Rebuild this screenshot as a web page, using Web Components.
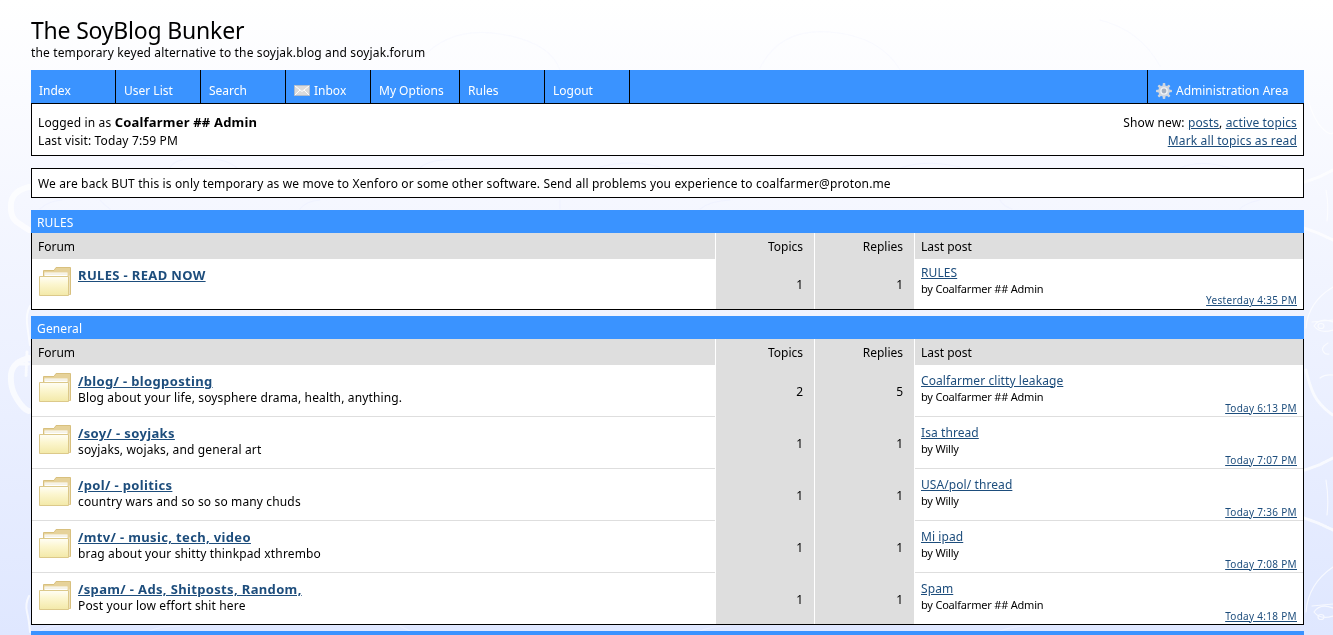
<!DOCTYPE html>
<html lang="en">
<head>
<meta charset="utf-8">
<title>The SoyBlog Bunker</title>
<style>
  html, body { margin: 0; padding: 0; height: 100%; overflow: hidden; }
  body {
    font: 12px/16px "Noto Sans", sans-serif;
    letter-spacing: .14px;
    color: #000;
    background: linear-gradient(180deg, #ffffff 0, #f5f7ff 200px, #dfe7ff 635px);
  }
  #wrap { position: relative; padding: 0 29px 0 31px; }
</style>
</head>
<body>
<page-doodles></page-doodles>
<div id="wrap">
  <board-title name="The SoyBlog Bunker" tagline="the temporary keyed alternative to the soyjak.blog and soyjak.forum"></board-title>

  <nav-bar>
    <nav-item>Index</nav-item>
    <nav-item>User List</nav-item>
    <nav-item>Search</nav-item>
    <nav-item icon="mail">Inbox</nav-item>
    <nav-item w="89">My Options</nav-item>
    <nav-item>Rules</nav-item>
    <nav-item>Logout</nav-item>
    <nav-item slot="right" icon="gear" wide>Administration Area</nav-item>
  </nav-bar>

  <user-box>
    <span slot="left">Logged in as <b>Coalfarmer ## Admin</b></span>
    <span slot="left">Last visit: Today 7:59 PM</span>
    <span slot="right">Show new: <a href="#">posts</a>, <a href="#">active topics</a></span>
    <span slot="right"><a href="#">Mark all topics as read</a></span>
  </user-box>

  <notice-box>We are back BUT this is only temporary as we move to Xenforo or some other software. Send all problems you experience to coalfarmer@proton.me</notice-box>

  <forum-category name="RULES">
    <forum-row short name="RULES - READ NOW" topics="1" replies="1" post="RULES" by="Coalfarmer ## Admin" time="Yesterday 4:35 PM"></forum-row>
  </forum-category>

  <forum-category name="General">
    <forum-row name="/blog/ - blogposting" desc="Blog about your life, soysphere drama, health, anything." topics="2" replies="5" post="Coalfarmer clitty leakage" by="Coalfarmer ## Admin" time="Today 6:13 PM"></forum-row>
    <forum-row name="/soy/ - soyjaks" desc="soyjaks, wojaks, and general art" topics="1" replies="1" post="Isa thread" by="Willy" time="Today 7:07 PM"></forum-row>
    <forum-row name="/pol/ - politics" desc="country wars and so so so many chuds" topics="1" replies="1" post="USA/pol/ thread" by="Willy" time="Today 7:36 PM"></forum-row>
    <forum-row name="/mtv/ - music, tech, video" desc="brag about your shitty thinkpad xthrembo" topics="1" replies="1" post="Mi ipad" by="Willy" time="Today 7:08 PM"></forum-row>
    <forum-row last name="/spam/ - Ads, Shitposts, Random," desc="Post your low effort shit here" topics="1" replies="1" post="Spam" by="Coalfarmer ## Admin" time="Today 4:18 PM"></forum-row>
  </forum-category>

  <forum-category></forum-category>
</div>

<script>
const BLUE = '#3a93ff';
const LINK = '#1d4d7c';
const COLS = '1fr 98px 99px 388px';

const ICONS = {
  mail: `<svg width="16" height="11" viewBox="0 0 16 11"><rect x=".5" y=".5" width="15" height="10" fill="#dcdcdc" stroke="#aebccd"/><path d="M1 1l7 5.500 7-5.500M1 10l5-5M15 10l-5-5" fill="none" stroke="#fff"/></svg>`,
  gear: `<svg width="16" height="16" viewBox="0 0 16 16"><g fill="#cfd6e0"><circle cx="8" cy="8" r="5.800"/><rect x="6.700" y="0" width="2.600" height="16" rx=".8"/><rect x="6.700" y="0" width="2.600" height="16" rx=".8" transform="rotate(45 8 8)"/><rect x="6.700" y="0" width="2.600" height="16" rx=".8" transform="rotate(90 8 8)"/><rect x="6.700" y="0" width="2.600" height="16" rx=".8" transform="rotate(135 8 8)"/></g><circle cx="8" cy="8" r="3.800" fill="#eef1f5"/><circle cx="8" cy="8" r="2.400" fill="#a3b0c2"/></svg>`
};

// faint white sketches behind the board, drawn on the page background
class PageDoodles extends HTMLElement {
  connectedCallback() {
    this.attachShadow({ mode: 'open' }).innerHTML = `
      <style>
        :host { position: fixed; inset: 0; display: block; pointer-events: none; opacity: .7; }
        svg { display: block; }
        path { fill: none; stroke: #fff; stroke-linecap: round; }
        .hair { stroke-width: 4; stroke-dasharray: 1 1.500; }
        .thin { stroke-width: 1.200; }
        .soft { stroke-width: 1.200; stroke: #eef1ff; }
      </style>
      <svg width="1333" height="635">
        <!-- right margin -->
        <path class="thin" d="M1308 100q6 20 14 28t11 5"/>
        <path class="hair" style="stroke-width:3" d="M1305 182l14-5 14-7"/>
        <path class="thin" d="M1326 190q3 15 1 31"/>
        <path class="hair" style="stroke-width:3" d="M1304 228l14 5 15 7"/>
        <path class="thin" d="M1306 328q2-26 27-41M1312 322l21-2M1314 326q6-9 19-4M1314 326q6 8 19 4"/>
        <path class="thin" d="M1318 326a3 2.500 0 1 0 6 0a3 2.500 0 1 0-6 0M1328 343q-7 4-5 8t6 3M1320 378q5-4 13-3"/>
        <path class="hair" style="stroke-width:3" d="M1306 370q5 22 12 31t15 14"/>
        <path class="hair" style="stroke-width:3" d="M1305 470l14-5 14-7"/>
        <path class="thin" d="M1326 480q3 18 1 35"/>
        <path class="hair" style="stroke-width:3" d="M1304 518l14 5 15 7"/>
        <path class="thin" d="M1306 612q2-28 27-45M1312 606l21-2M1314 612q6-9 19-4M1314 612q6 8 19 4"/>
        <path class="thin" d="M1318 617a3 2.500 0 1 0 6 0a3 2.500 0 1 0-6 0"/>
        <!-- left margin -->
        <path class="hair" style="stroke-width:6" d="M29 187q-17 4-18 17t6 18 12 8"/>
        <path class="thin" style="stroke-width:2" d="M30 306q-4 8-3 17t3 22"/>
        <path class="hair" style="stroke-width:3" d="M20 364h9M27 352l-1 24"/>
        <path class="hair" style="stroke-width:6" d="M29 358q-17 4-18 17t6 24 12 12"/>
        <path class="thin" style="stroke-width:2" d="M29 596q-4 8-2 16t3 20"/>
        <!-- gaps between the boxes -->
        <path class="soft" d="M170 168q4-10 30-10t37 10M420 168q8-9 40-9M600 167q30-8 60 0M900 168q25-9 60-1M1180 168q20-9 50 0"/>
        <path class="soft" d="M40 209q8-8 22-9M100 200q4 5 10 9M300 209q6-8 20-9M560 200v9M700 209q10-8 30-9M1000 200q3 6 12 9M1240 209q5-6 20-9"/>
        <path class="soft" d="M90 316q6-6 22-6M280 310q4 3 8 6M480 316q10-6 30-6M880 316q10-6 30-6M1100 310v6"/>
        <path class="soft" d="M40 631q6-5 20-5M150 631q10-5 30-5M400 626q6 3 10 5M700 631q12-5 30-5M1000 631q12-5 30-5"/>
        <!-- top band -->
        <path class="soft" style="stroke:#f7f8ff" d="M420 60q30-34 80-26t60 36M760 68q20-40 70-36t70 38M1100 20q40 10 60 46"/>
      </svg>`;
  }
}

class BoardTitle extends HTMLElement {
  connectedCallback() {
    this.attachShadow({ mode: 'open' }).innerHTML = `
      <style>
        :host { display: block; height: 70px; box-sizing: border-box; padding-top: 15px; }
        h1 { margin: 0; font: 400 23px/30px "Noto Sans", sans-serif; letter-spacing: -.2px; }
        p { margin: 1px 0 0; line-height: 14px; }
      </style>
      <h1>${this.getAttribute('name')}</h1>
      <p>${this.getAttribute('tagline')}</p>`;
  }
}

class NavBar extends HTMLElement {
  connectedCallback() {
    this.attachShadow({ mode: 'open' }).innerHTML = `
      <style>
        :host { display: flex; justify-content: space-between; height: 33px; background: ${BLUE}; }
        div { display: flex; }
      </style>
      <div><slot></slot></div>
      <div><slot name="right"></slot></div>`;
  }
}

class NavItem extends HTMLElement {
  connectedCallback() {
    const icon = this.getAttribute('icon');
    const w = this.getAttribute('w') || 85;
    this.attachShadow({ mode: 'open' }).innerHTML = `
      <style>
        :host {
          display: flex; align-items: center; gap: 4px; box-sizing: border-box;
          height: 33px; padding: 8px 8px 0 8px; width: ${w}px; color: #fff;
          border-right: 1px solid #000; white-space: nowrap; letter-spacing: 0;
        }
        :host([wide]) { width: 157px; border-right: 0; border-left: 1px solid #000; }
        svg { display: block; flex: none; }
      </style>
      ${icon ? ICONS[icon] : ''}<slot></slot>`;
  }
}

class UserBox extends HTMLElement {
  connectedCallback() {
    this.attachShadow({ mode: 'open' }).innerHTML = `
      <style>
        :host {
          display: flex; justify-content: space-between; box-sizing: border-box;
          height: 53px; padding: 10px 6px 0; background: #fff;
          border: 1px solid #000; line-height: 18px;
        }
        div { display: flex; flex-direction: column; }
        .r { align-items: flex-end; }
        ::slotted(span) { display: block; }
      </style>
      <div><slot name="left"></slot></div>
      <div class="r"><slot name="right"></slot></div>`;
    this.querySelectorAll('a').forEach(a => { a.style.color = LINK; });
    this.querySelectorAll('b').forEach(b => {
      b.style.fontSize = '13px';
      b.style.letterSpacing = '.2px';
      b.style.lineHeight = '14px';
    });
  }
}

class NoticeBox extends HTMLElement {
  connectedCallback() {
    this.attachShadow({ mode: 'open' }).innerHTML = `
      <style>
        :host {
          display: block; box-sizing: border-box; margin: 12px 0;
          height: 30px; padding: 7px 6px 0; background: #fff;
          border: 1px solid #000;
        }
      </style>
      <slot></slot>`;
  }
}

class ForumCategory extends HTMLElement {
  connectedCallback() {
    const name = this.getAttribute('name');
    this.attachShadow({ mode: 'open' }).innerHTML = `
      <style>
        :host { display: block; margin-bottom: 6px; }
        .cat { height: 23px; box-sizing: border-box; padding: 5px 6px 0; background: ${BLUE}; color: #fff; line-height: 16px; }
        .box { border: 1px solid #000; border-top: 0; background: #fff; }
        .head {
          display: grid; grid-template-columns: ${COLS}; column-gap: 1px;
          height: 26px; background: #fff; letter-spacing: 0;
        }
        .head div { background: #dedede; padding: 0 6px; height: 26px; line-height: 27px; overflow: hidden; }
        .head .n { text-align: right; padding-right: 11px; }
      </style>
      <div class="cat">${name || ''}</div>
      ${name ? `<div class="box">
        <div class="head">
          <div>Forum</div><div class="n">Topics</div><div class="n">Replies</div><div>Last post</div>
        </div>
        <slot></slot>
      </div>` : ''}`;
  }
}

class ForumRow extends HTMLElement {
  connectedCallback() {
    const a = n => this.getAttribute(n);
    this.attachShadow({ mode: 'open' }).innerHTML = `
      <style>
        :host {
          display: grid; grid-template-columns: ${COLS}; column-gap: 1px;
          height: 52px; background: #fff; box-sizing: border-box;
        }
        :host([short]) { height: 50px; }
        :host([last]) { height: 51px; }
        a { color: ${LINK}; }
        .forum, .post { border-bottom: 1px solid #dedede; }
        :host([last]) .forum, :host([last]) .post, :host([short]) .forum, :host([short]) .post { border-bottom: 0; }
        .forum { display: flex; gap: 6px; padding: 8px 0 0 7px; }
        .forum svg { flex: none; display: block; }
        .name { font-size: 13px; font-weight: 700; line-height: 17px; letter-spacing: .35px; }
        .desc { line-height: 15px; }
        .num {
          background: #dedede; display: flex; align-items: center; justify-content: flex-end;
          padding: 2px 11px 0 0; letter-spacing: 0;
        }
        .post { display: flex; flex-direction: column; justify-content: center; padding: 5px 6px 0; letter-spacing: .08px; }
        :host([short]) .post { padding-top: 3px; }
        .by { font-size: 11px; line-height: 16px; letter-spacing: -.2px; }
        .time { font-size: 10px; line-height: 12px; text-align: right; letter-spacing: .3px; margin-top: -3px; }
      </style>
      <div class="forum">
        <svg width="33" height="30" viewBox="0 0 33 30">
          <defs><linearGradient id="g" x1="0" y1="0" x2="0" y2="1">
            <stop offset="0" stop-color="#fffef6"/><stop offset=".4" stop-color="#fcf6d0"/><stop offset="1" stop-color="#f3e9a8"/>
          </linearGradient></defs>
          <path d="M4.500 9V3.500H15L17 .5h14.500V27.500H29" fill="#e6d29a" stroke="#d8c07e"/>
          <path d="M5.500 5.500h23v5h-23z" fill="#fff"/>
          <path d="M5.500 7h23" stroke="#ece6cf" fill="none"/>
          <path d="M29 10v17.500h1.500V8z" fill="#f6f1de"/>
          <path d="M.5 9.500h29v19H.5z" fill="url(#g)" stroke="#dcc98a"/>
        </svg>
        <div>
          <div class="name"><a href="#">${a('name')}</a></div>
          ${a('desc') ? `<div class="desc">${a('desc')}</div>` : ''}
        </div>
      </div>
      <div class="num">${a('topics')}</div>
      <div class="num">${a('replies')}</div>
      <div class="post">
        <div><a href="#">${a('post')}</a></div>
        <div class="by">by ${a('by')}</div>
        <div class="time"><a href="#">${a('time')}</a></div>
      </div>`;
  }
}

customElements.define('page-doodles', PageDoodles);
customElements.define('board-title', BoardTitle);
customElements.define('nav-bar', NavBar);
customElements.define('nav-item', NavItem);
customElements.define('user-box', UserBox);
customElements.define('notice-box', NoticeBox);
customElements.define('forum-category', ForumCategory);
customElements.define('forum-row', ForumRow);
</script>
</body>
</html>
